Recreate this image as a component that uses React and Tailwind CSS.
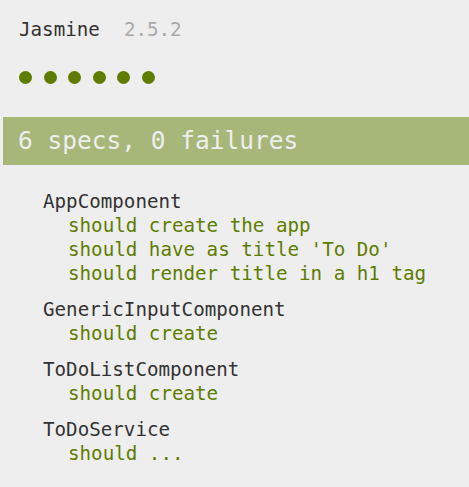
import React from 'react'

const suites = [
  { name: 'AppComponent', specs: ['should create the app', "should have as title 'To Do'", 'should render title in a h1 tag'] },
  { name: 'GenericInputComponent', specs: ['should create'] },
  { name: 'ToDoListComponent', specs: ['should create'] },
  { name: 'ToDoService', specs: ['should ...'] },
]

export default function App() {
  return (
    <div className="min-h-[487px] w-[469px] overflow-hidden bg-[#eeeeee] pt-[18px] font-['DejaVu_Sans_Mono',monospace] text-[19.2px] leading-[24px]">
      <div className="flex pl-[19px]">
        <span className="text-[#333333]">Jasmine</span>
        <span className="ml-[24px] text-[#aaaaaa]">2.5.2</span>
      </div>
      <div className="mt-[29px] flex gap-[11.5px] pl-[19px]">
        {[0, 1, 2, 3, 4, 5].map((i) => (
          <span key={i} className="block h-[13px] w-[13px] rounded-full bg-[#5e7d00]" />
        ))}
      </div>
      <div className="ml-[3px] mt-[33px] flex h-[48px] items-center bg-[#a7b779] pl-[15px] text-[24.5px] text-[#eeeeee]">
        6 specs, 0 failures
      </div>
      <div className="mt-[25px] pl-[43px]">
        {suites.map((s, i) => (
          <div key={s.name} className={i > 0 ? 'mt-[12px]' : ''}>
            <div className="text-[#333333]">{s.name}</div>
            {s.specs.map((sp) => (
              <div key={sp} className="pl-[25px] text-[#5e7d00] whitespace-pre">{sp}</div>
            ))}
          </div>
        ))}
      </div>
    </div>
  )
}
